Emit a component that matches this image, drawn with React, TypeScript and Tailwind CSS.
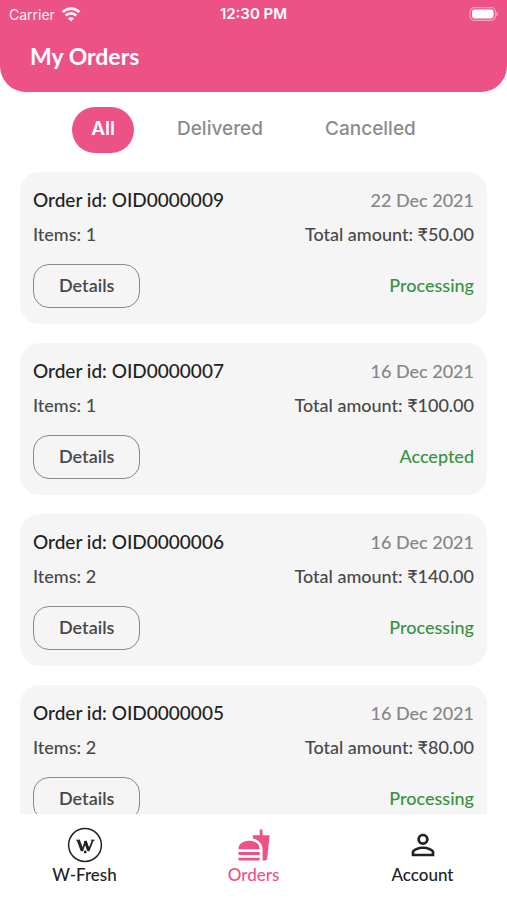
import { useState } from "react";
import { MdFastfood, MdPersonOutline } from "react-icons/md";

type Order = { id: string; date: string; items: number; total: string; status: string };

const orders: Order[] = [
  { id: "OID0000009", date: "22 Dec 2021", items: 1, total: "50.00", status: "Processing" },
  { id: "OID0000007", date: "16 Dec 2021", items: 1, total: "100.00", status: "Accepted" },
  { id: "OID0000006", date: "16 Dec 2021", items: 2, total: "140.00", status: "Processing" },
  { id: "OID0000005", date: "16 Dec 2021", items: 2, total: "80.00", status: "Processing" },
];

const tabs = ["All", "Delivered", "Cancelled"];

function WifiIcon() {
  return (
    <svg viewBox="0 0 20 15" className="h-[15px] w-5" fill="none" stroke="currentColor" strokeWidth="2.8" aria-hidden="true">
      <path d="M1.6 5.1a12 12 0 0 1 16.8 0" />
      <path d="M4.7 8.6a7.6 7.6 0 0 1 10.6 0" />
      <path d="M10 14.4 7 11.4a4.2 4.2 0 0 1 6 0Z" fill="currentColor" stroke="none" />
    </svg>
  );
}

function BatteryIcon() {
  return (
    <svg viewBox="0 0 31 14" className="h-[14px] w-[31px]" aria-label="Battery full" role="img">
      <rect x="3.1" y="0.7" width="25.4" height="12.6" rx="4" fill="none" stroke="#fff" strokeOpacity="0.45" strokeWidth="1.2" />
      <rect x="5" y="2.5" width="21.6" height="9" rx="2.4" fill="#fff" />
      <path d="M29.4 4.8c2 .7 2 3.7 0 4.4Z" fill="#fff" fillOpacity="0.5" />
    </svg>
  );
}

function FreshLogo() {
  return (
    <svg viewBox="0 0 36 36" className="size-9" aria-hidden="true">
      <circle cx="18" cy="18" r="16.4" fill="none" stroke="#222" strokeWidth="1.5" />
      <path d="M9 13.2h4.2M23.8 13.2h3.8" fill="none" stroke="#222" strokeWidth="1" />
      <path d="M11.3 13.2 15.2 23.6M18.2 14 21.6 23.6" fill="none" stroke="#222" strokeWidth="3" />
      <path d="M15 24.2 18.6 14M21.4 24.2 26 13" fill="none" stroke="#222" strokeWidth="1.8" />
      <circle cx="18.2" cy="25" r="1.4" fill="#222" />
    </svg>
  );
}

function OrderCard({ order }: { order: Order }) {
  return (
    <li className="shrink-0 rounded-[20px] bg-[#f5f5f5] px-[13px] py-4 text-[18px] leading-6 text-[#484848]">
      <div className="flex items-center justify-between">
        <h2 className="text-[19px] font-medium text-[#222]">Order id: {order.id}</h2>
        <time className="font-medium text-[#858585]">{order.date}</time>
      </div>
      <div className="mt-[10px] flex items-center justify-between font-medium">
        <p>Items: {order.items}</p>
        <p>Total amount: ₹{order.total}</p>
      </div>
      <div className="mt-[18px] flex items-center justify-between">
        <button type="button" className="h-11 rounded-2xl border border-[#8a8a8a] px-[25px] pb-[2px] font-semibold">
          Details
        </button>
        <p className="pb-[2px] font-medium text-[#389140]">{order.status}</p>
      </div>
    </li>
  );
}

export default function App() {
  const [active, setActive] = useState("All");
  return (
    <div className="flex h-screen flex-col overflow-hidden bg-white font-['Lato','Noto_Sans',sans-serif]">
      <header className="shrink-0 rounded-b-[26px] bg-[#ed5287] text-white">
        <div className="grid h-7 grid-cols-3 items-center px-[9px] font-['Inter',sans-serif] text-[15px]">
          <div className="flex items-center gap-[6px] text-white/90">
            <span className="text-[14px]">Carrier</span>
            <WifiIcon />
          </div>
          <time className="text-center font-semibold">12:30 PM</time>
          <div className="flex justify-end">
            <BatteryIcon />
          </div>
        </div>
        <h1 className="px-[30px] pt-3 pb-5 text-[23px] leading-8 font-bold">My Orders</h1>
      </header>

      <main className="flex min-h-0 flex-1 flex-col">
        <div role="tablist" className="mt-[15px] flex shrink-0 justify-center gap-6 font-['Inter',sans-serif] text-[19px]">
          {tabs.map((tab) => (
            <button
              key={tab}
              type="button"
              role="tab"
              aria-selected={tab === active}
              onClick={() => setActive(tab)}
              className={
                tab === active
                  ? "h-[46px] rounded-[23px] bg-[#ed5287] px-[19px] pb-[1px] font-semibold text-white"
                  : "h-[46px] rounded-[23px] px-[19px] pb-[1px] font-medium text-[#8c8c8c]"
              }
            >
              {tab}
            </button>
          ))}
        </div>
        <ul className="mt-[19px] flex min-h-0 flex-1 flex-col gap-[19px] overflow-hidden px-5">
          {orders.map((order) => (
            <OrderCard key={order.id} order={order} />
          ))}
        </ul>
      </main>

      <nav className="grid h-[86px] shrink-0 grid-cols-3 pt-[13px] text-[17px] leading-6 font-medium text-[#222]">
        <a href="#home" className="flex flex-col items-center">
          <FreshLogo />
          W-Fresh
        </a>
        <a href="#orders" aria-current="page" className="flex flex-col items-center text-[#ed5287]">
          <span className="flex h-9 items-center">
            <MdFastfood className="size-[34px]" />
          </span>
          Orders
        </a>
        <a href="#account" className="flex flex-col items-center">
          <span className="flex h-9 items-center">
            <MdPersonOutline className="size-[34px]" />
          </span>
          Account
        </a>
      </nav>
    </div>
  );
}
